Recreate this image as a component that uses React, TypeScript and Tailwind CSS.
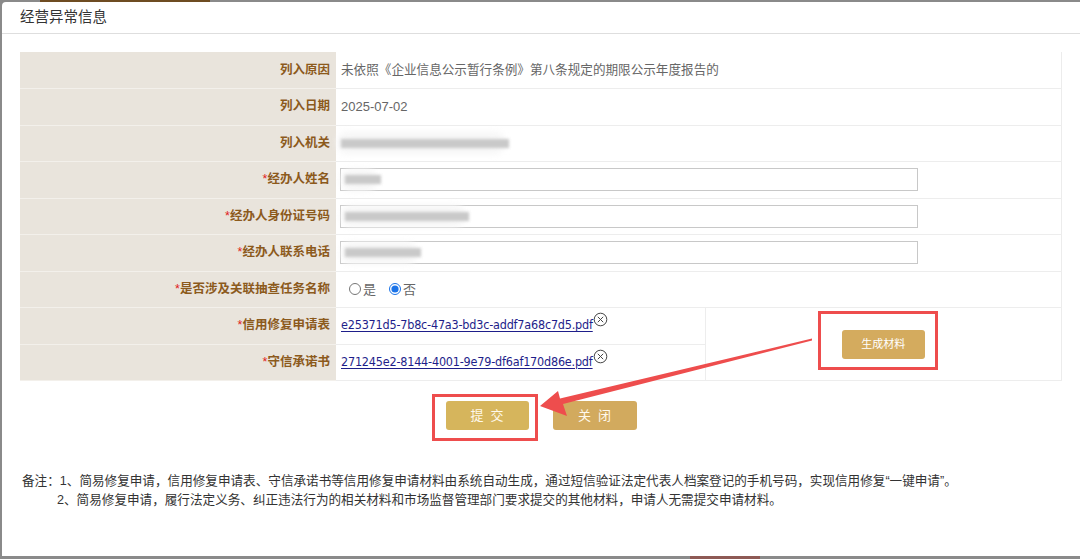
import React from "react";

const font = "font-['Liberation_Sans','Noto_Sans_CJK_SC',sans-serif]";

function Label({ text, required }: { text: string; required?: boolean }) {
  return (
    <td className="w-[316px] bg-[#e9e4dc] border-b border-[#f3f0eb] pr-[6px] text-right text-[12.5px] font-bold text-[#8c5a1c]">
      {required && <span className="text-[#e02020] font-normal">*</span>}
      {text}
    </td>
  );
}

function Blur({ w, halo }: { w: string; halo?: string }) {
  return (
    <div className="relative h-[10px] flex items-center">
      <div className={`absolute -left-[4px] h-[22px] bg-[#f6f6f6] rounded-full blur-[3px] ${halo ?? w}`} />
      <div className={`relative h-[9px] bg-[#c9c9c9] blur-[1.5px] ${w}`} />
    </div>
  );
}

function Field({ w }: { w: string }) {
  return (
    <div className="w-[578px] h-[23px] ml-[4px] border border-[#c8c8c8] flex items-center pl-[4px]">
      <Blur w={w} />
    </div>
  );
}

function FileLink({ name }: { name: string }) {
  return (
    <div className="flex items-start pl-[5px]">
      <a className="text-[12.5px] text-[#1e1e8a] underline underline-offset-2 font-['DejaVu_Sans_Condensed','Liberation_Sans',sans-serif] tracking-[-0.2px]">
        {name}
      </a>
      <svg width="15" height="15" viewBox="0 0 15 15" className="-mt-[4px]">
        <circle cx="7.5" cy="7.5" r="6.3" fill="none" stroke="#444" strokeWidth="1" />
        <path d="M4.8 4.8 L10.2 10.2 M10.2 4.8 L4.8 10.2" stroke="#444" strokeWidth="1" />
      </svg>
    </div>
  );
}

export default function App() {
  return (
    <div className={`relative w-[1080px] h-[559px] bg-[#8a8a8a] flex flex-col overflow-hidden ${font}`}>
      <div className="h-[2px] flex">
        <div className="ml-[40px] w-[170px] bg-[#6e4c22]" />
      </div>
      <div className="flex h-[554px]">
        <div className="w-[2px]" />
        <div className="flex-1 bg-white rounded-tl-[4px] flex flex-col">
          <div className="h-[32px] border-b border-[#dedede] flex items-center pl-[18px] text-[14.5px] text-[#333]">
            经营异常信息
          </div>

          <div className="px-[18px] pt-[18px]">
            <table className="w-[1042px] border-collapse border-r border-[#ececec] text-[13px] text-[#666]">
              <tbody>
                <tr className="h-[36.5px]">
                  <Label text="列入原因" />
                  <td colSpan={2} className="border-b border-[#ededed] pl-[5px] text-[12.6px]">
                    未依照《企业信息公示暂行条例》第八条规定的期限公示年度报告的
                  </td>
                </tr>
                <tr className="h-[36.5px]">
                  <Label text="列入日期" />
                  <td colSpan={2} className="border-b border-[#ededed] pl-[5px]">
                    2025-07-02
                  </td>
                </tr>
                <tr className="h-[36.5px]">
                  <Label text="列入机关" />
                  <td colSpan={2} className="border-b border-[#ededed] pl-[5px]">
                    <Blur w="w-[168px]" />
                  </td>
                </tr>
                <tr className="h-[36.5px]">
                  <Label text="经办人姓名" required />
                  <td colSpan={2} className="border-b border-[#ededed]">
                    <Field w="w-[36px]" />
                  </td>
                </tr>
                <tr className="h-[36.5px]">
                  <Label text="经办人身份证号码" required />
                  <td colSpan={2} className="border-b border-[#ededed]">
                    <Field w="w-[124px]" />
                  </td>
                </tr>
                <tr className="h-[36.5px]">
                  <Label text="经办人联系电话" required />
                  <td colSpan={2} className="border-b border-[#ededed]">
                    <Field w="w-[76px]" />
                  </td>
                </tr>
                <tr className="h-[36.5px]">
                  <Label text="是否涉及关联抽查任务名称" required />
                  <td colSpan={2} className="border-b border-[#ededed] pl-[13px]">
                    <div className="flex items-center gap-[1px]">
                      <input type="radio" name="r" className="w-[12px] h-[12px] m-0 accent-[#1a73e8]" />
                      <span className="mr-[12px] ml-[1px]">是</span>
                      <input type="radio" name="r" defaultChecked className="w-[12px] h-[12px] m-0 accent-[#1a73e8]" />
                      <span className="ml-[1px]">否</span>
                    </div>
                  </td>
                </tr>
                <tr className="h-[36.5px]">
                  <Label text="信用修复申请表" required />
                  <td className="w-[369px] border-b border-[#ededed]">
                    <FileLink name="e25371d5-7b8c-47a3-bd3c-addf7a68c7d5.pdf" />
                  </td>
                  <td rowSpan={2} className="border-l border-b border-[#ededed] text-center">
                    <button className="w-[83px] h-[29px] rounded-[3px] bg-[#d4ab5e] text-white text-[11px]">
                      生成材料
                    </button>
                  </td>
                </tr>
                <tr className="h-[36.5px]">
                  <Label text="守信承诺书" required />
                  <td className="border-b border-[#ededed]">
                    <FileLink name="271245e2-8144-4001-9e79-df6af170d86e.pdf" />
                  </td>
                </tr>
              </tbody>
            </table>

            <div className="flex justify-center gap-[24px] mt-[20px]">
              <button className="relative w-[83px] h-[29px] rounded-[3px] bg-[#d6b55c] text-[#fff9ec] text-[13px] tracking-[7px] pl-[7px]">
                提交
                <span className="absolute -left-[14px] -top-[7px] w-[106px] h-[47px] border-[3px] border-[#ee4d4d]" />
              </button>
              <button className="w-[84px] h-[29px] rounded-[3px] bg-[#d2aa5e] text-[#fff9ec] text-[13px] tracking-[7px] pl-[7px]">
                关闭
              </button>
            </div>

            <div className="mt-[42px] pl-[2px] text-[12.6px] leading-[19px] text-[#333]">
              <div>
                备注：1、简易修复申请，信用修复申请表、守信承诺书等信用修复申请材料由系统自动生成，通过短信验证法定代表人档案登记的手机号码，实现信用修复“一键申请”。
              </div>
              <div className="pl-[35px]">
                2、简易修复申请，履行法定义务、纠正违法行为的相关材料和市场监督管理部门要求提交的其他材料，申请人无需提交申请材料。
              </div>
            </div>
          </div>
        </div>
      </div>
      <div className="flex-1 flex">
        <div className="ml-[690px] w-[70px] bg-[#8e5a55]" />
      </div>

      <svg className="absolute inset-0 pointer-events-none" width="1080" height="559" viewBox="0 0 1080 559">
        <rect x="819.5" y="312.5" width="117" height="56" fill="none" stroke="#ee4d4d" strokeWidth="3" />
        <polygon
          points="540,406 558,391 560,398.5 812,338.5 812,340.5 563,404 567,416"
          fill="#ee4d4d"
        />
      </svg>
    </div>
  );
}
